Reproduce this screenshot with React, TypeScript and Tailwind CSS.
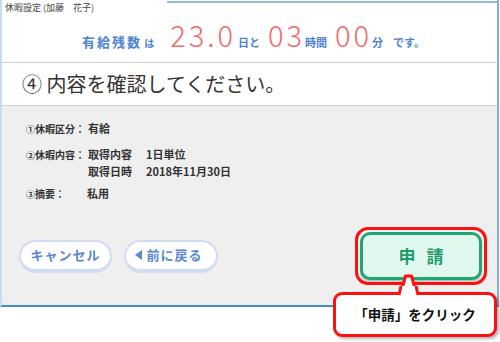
import React from "react";

const Remaining: React.FC = () => {
  return (
    <div className="flex items-baseline justify-center pl-[8px] pb-[11px] text-[#4f82d2]">
      <span className="text-[13px] font-bold tracking-[2px]">有給残数</span>
      <span className="ml-[2px] text-[10px] font-bold">は</span>
      <span className="ml-[16px] text-[29px] font-light leading-none tracking-[3px] text-[#f26a6a]">
        23.0
      </span>
      <span className="ml-[2px] text-[11px] font-bold">日と</span>
      <span className="ml-[8px] text-[29px] font-light leading-none tracking-[3px] text-[#f26a6a]">
        03
      </span>
      <span className="text-[11px] font-bold">時間</span>
      <span className="ml-[8px] text-[29px] font-light leading-none tracking-[3px] text-[#f26a6a]">
        00
      </span>
      <span className="text-[11px] font-bold">分</span>
      <span className="ml-[10px] text-[11px] font-bold">です。</span>
    </div>
  );
};

const Label: React.FC<{ num: string; text: string }> = ({ num, text }) => (
  <span className="w-[62px] shrink-0 whitespace-nowrap text-[10px]">
    <span className="text-[9px]">{num}</span>
    {text}
  </span>
);

const Details: React.FC = () => {
  return (
    <div className="pl-[24px] pt-[14px] text-[11px] font-bold leading-[17px] text-[#333]">
      <div className="flex">
        <Label num="①" text="休暇区分：" />
        <span>有給</span>
      </div>
      <div className="mt-[8px] flex">
        <Label num="②" text="休暇内容：" />
        <div>
          <div className="flex">
            <span className="w-[58px] shrink-0">取得内容</span>
            <span>1日単位</span>
          </div>
          <div className="flex">
            <span className="w-[58px] shrink-0">取得日時</span>
            <span>2018年11月30日</span>
          </div>
        </div>
      </div>
      <div className="mt-[5px] flex">
        <Label num="③" text="摘要：" />
        <span className="-ml-[1px]">私用</span>
      </div>
    </div>
  );
};

export default function App() {
  return (
    <div className="relative h-[342px] w-[500px] overflow-hidden bg-white font-['Noto_Sans_CJK_JP',sans-serif]">
      <div className="flex h-[307px] w-[499px] flex-col border-b-2 border-l-2 border-r-2 border-b-[#3f8ccf] border-l-[#c6dcf1] border-r-[#7fb1dd]">
        {/* header */}
        <div className="flex h-[63px] flex-col border-b border-[#d2d2d2] bg-white">
          <div className="flex items-start">
            <span className="pl-[3px] pt-[2px] text-[9px] leading-[12px] text-[#444]">
              休暇設定 (加藤　花子)
            </span>
            <div className="mt-[1px] ml-auto w-[330px] border-t-2 border-[#92b9df]" />
          </div>
          <div className="mt-auto">
            <Remaining />
          </div>
        </div>
        <div className="flex h-[43px] items-center border-b border-[#d2d2d2] bg-white pl-[20px] text-[20px] text-[#333]">
          ④ 内容を確認してください。
        </div>

        {/* body */}
        <div className="flex flex-1 flex-col bg-[#efefef]">
          <Details />
          <div className="mt-auto mb-[20px] flex items-center pl-[17px] pr-[10px]">
            <button className="h-[33px] w-[93px] rounded-full border-2 border-b-[4px] border-[#d0ddf1] bg-white text-[13px] font-bold tracking-[1px] text-[#5a86d3]">
              キャンセル
            </button>
            <button className="ml-[12px] flex h-[33px] w-[94px] items-center justify-center gap-[4px] rounded-full border-2 border-b-[4px] border-[#d0ddf1] bg-white pr-[4px] text-[13px] font-bold tracking-[1px] text-[#5a86d3]">
              <svg width="7" height="10" viewBox="0 0 7 10">
                <path d="M7 0 L0 5 L7 10 Z" fill="#5a86d3" />
              </svg>
              前に戻る
            </button>
            <div className="ml-auto rounded-[13px] border-[3px] border-[#ff1010] bg-white/60 p-[2px]">
              <button className="flex h-[48px] w-[122px] items-center justify-center gap-[11px] rounded-[10px] border-[3px] border-[#21a673] bg-[#e1f8ee] text-[17px] font-bold text-[#1e9c6a] shadow-[0_2px_2px_rgba(0,0,0,0.25)]">
                <span>申</span>
                <span>請</span>
              </button>
            </div>
          </div>
        </div>
      </div>

      {/* callout */}
      <svg
        className="absolute left-[396px] top-[273px]"
        width="26"
        height="24"
        viewBox="0 0 26 24"
      >
        <path d="M4 23 L9.5 3 L15.5 3 L21 23 Z" fill="#fff" />
        <path
          d="M4 23 L9.5 3 L15.5 3 L21 23"
          fill="none"
          stroke="#ff1010"
          strokeWidth="3"
          strokeLinejoin="round"
        />
      </svg>
      <div className="absolute left-[333px] top-[292px] flex h-[45px] w-[164px] items-center justify-center rounded-[9px] border-[3px] border-[#ff1010] bg-white text-[13.5px] font-bold text-[#111] shadow-[2px_2px_3px_rgba(0,0,0,0.3)]">
        「申請」をクリック
      </div>
      <svg
        className="absolute left-[396px] top-[286px]"
        width="26"
        height="11"
        viewBox="0 0 26 11"
      >
        <path d="M5.2 0 L19.8 0 L21.5 9 L3.5 9 Z" fill="#fff" />
        <path d="M5 0 L3 9 M20 0 L22 9" stroke="#ff1010" strokeWidth="3" />
      </svg>
    </div>
  );
}
